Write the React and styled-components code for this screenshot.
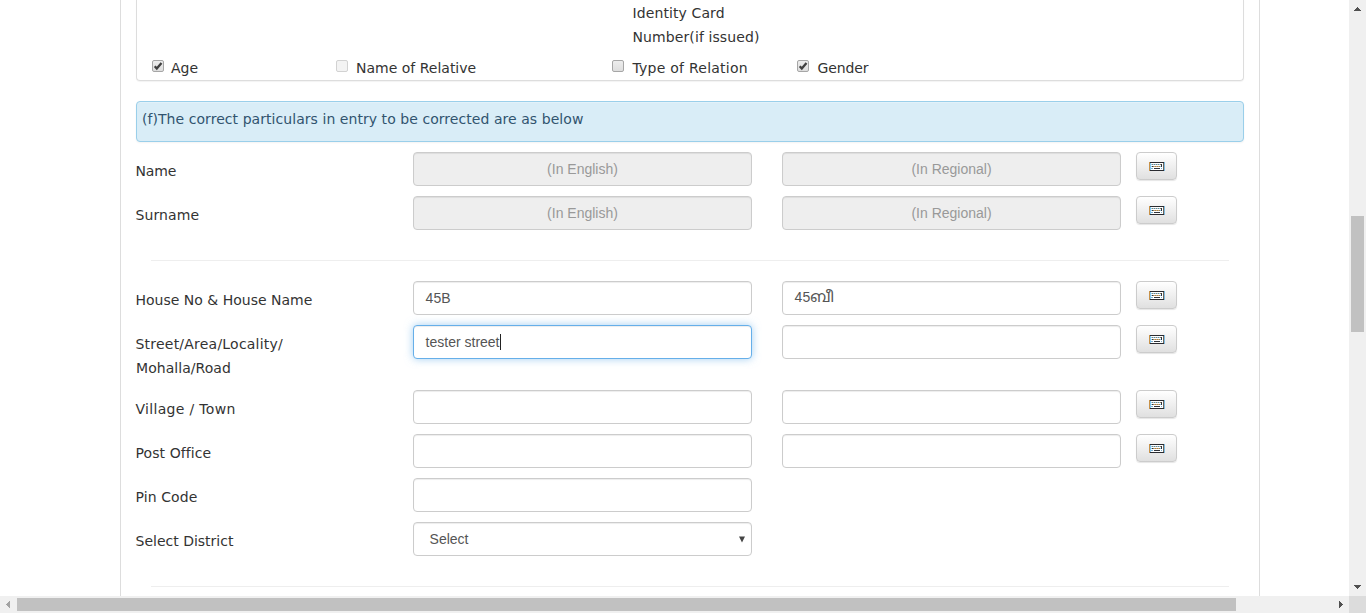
import React from 'react';
import styled, { createGlobalStyle, css } from 'styled-components';

const GlobalStyle = createGlobalStyle`
  * { box-sizing: border-box; }
  body {
    margin: 0;
    overflow: hidden;
    background: #fff;
    color: #333;
    font: 14px/24px Verdana, "DejaVu Sans", sans-serif;
  }
`;

const Window = styled.div`
  display: grid;
  grid-template-columns: minmax(0, 1fr) 17px;
  grid-template-rows: minmax(0, 1fr) 17px;
  height: 613px;
`;

const Viewport = styled.main`
  overflow: hidden;
  padding-left: 120px;
`;

const Container = styled.div`
  width: 1140px;
  height: 596px;
  padding: 0 15px;
  border: solid #ddd;
  border-width: 0 1px;
`;

const Panel = styled.section`
  height: 81px;
  padding: 1px 15px 0;
  border: 1px solid #ddd;
  border-top: 0;
  border-radius: 0 0 4px 4px;
  box-shadow: 0 1px 1px rgba(0, 0, 0, 0.05);
`;

const CheckGrid = styled.div`
  display: grid;
  grid-template-columns: 184px 276px 185px 1fr;
  row-gap: 7px;
`;

const Continued = styled.div`
  grid-column: 3 / 5;
  padding-left: 20.5px;
  white-space: nowrap;
`;

const Option = styled.label`
  display: flex;
  gap: ${(p) => p.$gap || 8}px;
  white-space: nowrap;
`;

const Box = styled.span`
  display: flex;
  width: 12px;
  height: 12px;
  margin-top: 4px;
  border: 1px solid ${(p) => (p.$disabled ? '#d2d2d2' : '#a6a6a6')};
  border-radius: 2px;
  background: ${(p) => (p.$disabled ? '#f3f3f3' : 'linear-gradient(#ededed, #dedede)')};

  svg { display: block; overflow: visible; }
`;

const Text = styled.span`
  letter-spacing: ${(p) => p.$track || 0}px;
`;

const Notice = styled.div`
  height: 41px;
  margin-top: 20px;
  padding: 5px;
  border: 1px solid #9acfea;
  border-radius: 4px;
  background: #d9edf7;
  color: #31546f;
  box-shadow: 0 1px 2px rgba(0, 0, 0, 0.05), inset 0 1px 0 rgba(255, 255, 255, 0.25);
`;

const Fields = styled.div`
  display: grid;
  row-gap: 10px;
  padding-top: ${(p) => p.$top}px;
`;

const FieldRow = styled.div`
  display: grid;
  grid-template-columns: 277px 339px 339px 41px;
  align-items: start;

  & > :nth-child(3) { margin-left: 30px; margin-right: -30px; }
  & > :nth-child(4) { margin-left: 45px; }
`;

const Label = styled.div`
  padding-top: 7px;
  text-indent: -0.5px;
  letter-spacing: ${(p) => p.$track || 0}px;
`;

const Field = styled.div`
  display: flex;
  align-items: center;
  justify-content: ${(p) => (p.$disabled ? 'center' : 'flex-start')};
  height: 34px;
  padding: 0 11.6px;
  border: 1px solid #ccc;
  border-radius: 4px;
  background: ${(p) => (p.$disabled ? '#eee' : '#fff')};
  color: ${(p) => (p.$disabled ? '#999' : '#555')};
  font: 14px/20px "Liberation Sans", Arial, sans-serif;
  box-shadow: inset 0 1px 1px rgba(0, 0, 0, 0.075);
  ${(p) => p.$focus && css`
    border-color: #66afe9;
    box-shadow: inset 0 1px 1px rgba(0, 0, 0, 0.075), 0 0 8px rgba(102, 175, 233, 0.6);
  `}
`;

const Caret = styled.span`
  width: 1px;
  height: 16px;
  background: #222;
`;

const Regional = styled.span`
  padding-bottom: 2px;
  font-family: "Liberation Sans", "Noto Sans Malayalam", Meera, sans-serif;
`;

const Script = styled.span`
  font-size: 15.5px;
  line-height: 16px;
`;

const Select = styled(Field)`
  justify-content: space-between;
  padding: 0 5px 0 15.6px;
`;

const KeyButton = styled.button`
  display: flex;
  align-items: center;
  justify-content: center;
  width: 41px;
  height: 28px;
  padding: 1px 0 0 1px;
  border: 1px solid #ccc;
  border-radius: 4px;
  background: linear-gradient(#fff, #e0e0e0);
  box-shadow: 0 1px 1px rgba(0, 0, 0, 0.1);
`;

const Divider = styled.div`
  height: 1px;
  margin: 30px 15px 0;
  background: #eee;
`;

const VerticalBar = styled.div`
  display: flex;
  flex-direction: column;
  align-items: center;
  background: #f0f0f0;
`;

const VerticalThumb = styled.div`
  width: 13px;
  height: 116px;
  margin: 199px 0 auto;
  background: #c1c1c1;
`;

const HorizontalBar = styled.div`
  display: flex;
  align-items: center;
  background: #f0f0f0;
`;

const HorizontalThumb = styled.div`
  width: 1219px;
  height: 13px;
  margin-right: auto;
  background: #c1c1c1;
`;

const Corner = styled.div`
  background: #dcdcdc;
`;

const arrows = {
  up: 'M8 7h1v1h1v1h1v1h1v1H5v-1h1V9h1V8h1z',
  down: 'M5 6h7v1h-1v1h-1v1H9v1H8V9H7V8H6V7H5z',
  left: 'M10 5v7H9v-1H8v-1H7V9H6V8h1V7h1V6h1V5z',
  right: 'M7 5h1v1h1v1h1v1h1v1h-1v1H9v1H8v1H7z',
};

const Arrow = ({ dir, color = '#505050' }) => (
  <svg width="17" height="17" viewBox="0 0 17 17" shapeRendering="crispEdges">
    <path d={arrows[dir]} fill={color} />
  </svg>
);

const CheckBox = ({ label, checked, disabled, track, gap }) => (
  <Option $gap={gap}>
    <Box $disabled={disabled}>
      {checked && (
        <svg width="10" height="10" viewBox="0 0 10 10">
          <path d="M1.7 5.2 3.8 7.5 8.5 2" fill="none" stroke="#404040" strokeWidth="2.3" />
        </svg>
      )}
    </Box>
    <Text $track={track}>{label}</Text>
  </Option>
);

const Keyboard = () => (
  <KeyButton aria-label="Keyboard">
    <svg width="16" height="9" viewBox="0 0 16 9" shapeRendering="crispEdges">
      <path d="M2 1h12v7H2z" fill="#fff" />
      <path d="M1 0h14v1H1zM1 8h14v1H1z" fill="#292b30" />
      <path d="M0 0h1v9H0z" fill="#c99248" />
      <path d="M1 1h1v7H1zM14 1h1v7h-1z" fill="#83c7ef" />
      <path d="M15 0h1v9h-1z" fill="#7fbce0" />
      <path d="M14 1h1v7h-1z" fill="#6d645a" />
      <path d="M3 2h1v1H3zM5 2h1v1H5zM7 2h1v1H7zM9 2h1v1H9zM11 2h1v1h-1zM4 4h1v1H4zM6 4h1v1H6zM8 4h1v1H8zM10 4h1v1h-1z" fill="#8a806c" />
      <path d="M2 2h1v1H2zM4 2h1v1H4zM6 2h1v1H6zM8 2h1v1H8zM10 2h1v1h-1zM2 4h1v1H2zM11 4h1v1h-1z" fill="#8ccbed" />
      <path d="M5 4h1v1H5zM7 4h1v1H7zM9 4h1v1H9z" fill="#dba85e" />
      <path d="M12 2h1v3h-1zM3 4h1v1H3zM5 6h6v1H5z" fill="#303339" />
      <path d="M2 6h2v1H2zM12 6h1v1h-1z" fill="#78afd0" />
    </svg>
  </KeyButton>
);

const NameRow = ({ label, track }) => (
  <FieldRow>
    <Label $track={track}>{label}</Label>
    <Field $disabled>(In English)</Field>
    <Field $disabled>(In Regional)</Field>
    <Keyboard />
  </FieldRow>
);

const AddressRow = ({ label, track, value, regional, focus }) => (
  <FieldRow>
    <Label $track={track}>{label}</Label>
    <Field $focus={focus}>{value}{focus && <Caret />}</Field>
    <Field>{regional}</Field>
    <Keyboard />
  </FieldRow>
);

export default function App() {
  return (
    <>
      <GlobalStyle />
      <Window>
        <Viewport>
          <Container>
            <Panel>
              <CheckGrid>
                <Continued>
                  <Text $track={0.1}>Identity Card</Text><br />
                  <Text $track={0.1}>Number(if issued)</Text>
                </Continued>
                <CheckBox label="Age" checked gap={7} />
                <CheckBox label="Name of Relative" disabled />
                <CheckBox label="Type of Relation" track={0.25} gap={8.4} />
                <CheckBox label="Gender" checked track={-0.1} gap={8.4} />
              </CheckGrid>
            </Panel>
            <Notice><Text $track={0.055}>(f)The correct particulars in entry to be corrected are as below</Text></Notice>
            <Fields $top={10}>
              <NameRow label="Name" track={-0.15} />
              <NameRow label="Surname" track={0.1} />
            </Fields>
            <Divider />
            <Fields $top={20}>
              <AddressRow
                label="House No & House Name"
                value="45B"
                regional={<Regional>45<Script>ബീ</Script></Regional>}
              />
              <AddressRow
                label={<><Text $track={0.22}>Street/Area/Locality/</Text><br /><Text $track={0.05}>Mohalla/Road</Text></>}
                value="tester street"
                focus
              />
              <AddressRow label="Village / Town" track={0.32} />
              <AddressRow label="Post Office" track={0.08} />
              <FieldRow>
                <Label $track={0.08}>Pin Code</Label>
                <Field />
              </FieldRow>
              <FieldRow>
                <Label>Select District</Label>
                <Select>
                  Select
                  <svg width="8" height="7" viewBox="0 0 8 7"><path d="M1 .5h6L4 6.5z" fill="#444" /></svg>
                </Select>
              </FieldRow>
            </Fields>
            <Divider />
          </Container>
        </Viewport>
        <VerticalBar>
          <Arrow dir="up" />
          <VerticalThumb />
          <Arrow dir="down" />
        </VerticalBar>
        <HorizontalBar>
          <Arrow dir="left" color="#a3a3a3" />
          <HorizontalThumb />
          <Arrow dir="right" />
        </HorizontalBar>
        <Corner />
      </Window>
    </>
  );
}
